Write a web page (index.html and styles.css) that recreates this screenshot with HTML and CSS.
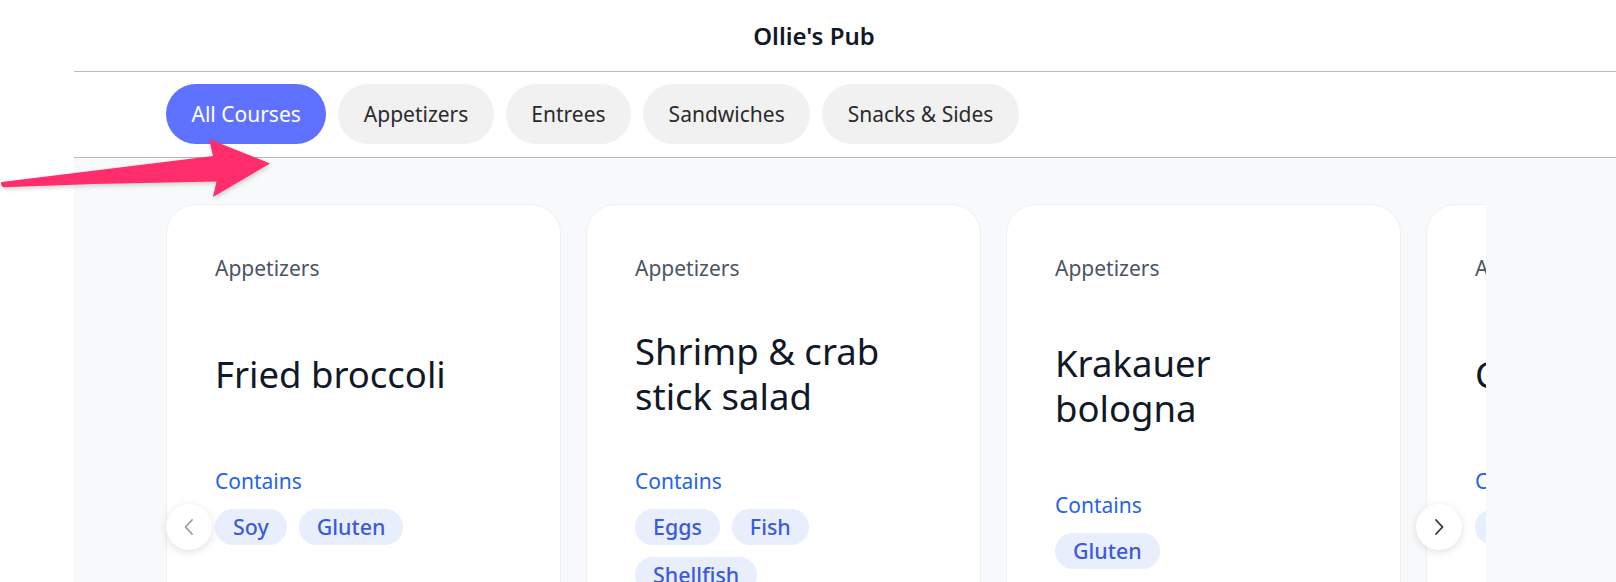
FILE: index.html
```html
<!DOCTYPE html>
<html lang="en">
<head>
<meta charset="utf-8">
<title>Ollie's Pub</title>
<link rel="stylesheet" href="styles.css">
</head>
<body>
<div class="page">
  <header class="topbar">
    <h1 class="venue">Ollie's Pub</h1>
  </header>
  <div class="layout">
    <div class="gutter"></div>
    <main class="main">
      <nav class="course-tabs">
        <button class="tab tab-active">All Courses</button>
        <button class="tab">Appetizers</button>
        <button class="tab">Entrees</button>
        <button class="tab">Sandwiches</button>
        <button class="tab">Snacks &amp; Sides</button>
      </nav>
      <section class="menu">
        <div class="carousel">
          <div class="track">
            <article class="card">
              <div class="card-course">Appetizers</div>
              <div class="card-title-wrap"><h2 class="card-title">Fried broccoli</h2></div>
              <div class="allergens">
                <div class="allergens-label">Contains</div>
                <ul class="chips">
                  <li class="chip">Soy</li>
                  <li class="chip">Gluten</li>
                </ul>
              </div>
              <p class="card-desc lines-7">Crispy battered broccoli florets fried golden and served hot with a side of house-made garlic aioli and a wedge of lemon for squeezing. A pub favourite for sharing at the table with friends before the main course arrives from the kitchen.</p>
              <div class="card-price">$8.50</div>
            </article>
            <article class="card">
              <div class="card-course">Appetizers</div>
              <div class="card-title-wrap"><h2 class="card-title">Shrimp &amp; crab stick salad</h2></div>
              <div class="allergens">
                <div class="allergens-label">Contains</div>
                <ul class="chips">
                  <li class="chip">Eggs</li>
                  <li class="chip">Fish</li>
                  <li class="chip">Shellfish</li>
                </ul>
              </div>
              <p class="card-desc lines-5">Chilled shrimp and crab sticks tossed with crisp lettuce, cucumber, sweet corn and a light creamy dressing, finished with fresh dill and cracked black pepper. Served cold with toasted bread on the side.</p>
              <div class="card-price">$11.00</div>
            </article>
            <article class="card">
              <div class="card-course">Appetizers</div>
              <div class="card-title-wrap"><h2 class="card-title">Krakauer bologna</h2></div>
              <div class="allergens">
                <div class="allergens-label">Contains</div>
                <ul class="chips">
                  <li class="chip">Gluten</li>
                </ul>
              </div>
              <p class="card-desc lines-6">Thinly sliced smoked Krakauer sausage served on a wooden board with pickles, spicy mustard, pickled onions and fresh rye bread. A hearty classic from the old country, great with a cold lager or a dark stout.</p>
              <div class="card-price">$9.75</div>
            </article>
            <article class="card">
              <div class="card-course">Appetizers</div>
              <div class="card-title-wrap"><h2 class="card-title">Cheese curds</h2></div>
              <div class="allergens">
                <div class="allergens-label">Contains</div>
                <ul class="chips">
                  <li class="chip">Milk</li>
                  <li class="chip">Gluten</li>
                </ul>
              </div>
              <p class="card-desc lines-7">Fresh white cheddar curds dipped in a light beer batter and fried until golden and squeaky, served with a tangy ranch dipping sauce and a sprinkle of chopped chives. Perfect for sharing with the whole table on game night.</p>
              <div class="card-price">$7.25</div>
            </article>
          </div>
          <button class="nav-btn nav-prev" aria-label="Previous">
            <svg width="14" height="18" viewBox="0 0 14 18"><path d="M10 2 L3.5 9 L10 16" fill="none" stroke="#9a9a9a" stroke-width="1.8" stroke-linecap="round" stroke-linejoin="round"/></svg>
          </button>
          <button class="nav-btn nav-next" aria-label="Next">
            <svg width="14" height="18" viewBox="0 0 14 18"><path d="M4 2 L10.5 9 L4 16" fill="none" stroke="#333333" stroke-width="1.8" stroke-linecap="round" stroke-linejoin="round"/></svg>
          </button>
        </div>
      </section>
    </main>
  </div>
  <svg class="annotation-arrow" width="280" height="80" viewBox="0 0 280 80" aria-hidden="true">
    <path d="M1.5 52 L213 26 L209 9 L270 33.5 L213 67 L216.5 51.5 Q110 53 3 57.2 Q0 54.6 1.5 52 Z" fill="#ff2d6b"/>
  </svg>
</div>
</body>
</html>
```

FILE: styles.css
```css
* {
  box-sizing: border-box;
}

html, body {
  margin: 0;
  padding: 0;
  background: #ffffff;
}

body {
  font-family: "Noto Sans", "Open Sans", sans-serif;
  color: #111827;
}

.page {
  position: relative;
  width: 100%;
  height: 100vh;
  overflow: hidden;
  display: flex;
  flex-direction: column;
}

.topbar {
  height: 71px;
  display: flex;
  align-items: center;
  justify-content: center;
  padding-left: 12px;
  flex: none;
}

.venue {
  margin: 0;
  font-size: 24px;
  line-height: 32px;
  font-weight: 600;
  color: #111827;
}

.layout {
  flex: 1;
  display: flex;
  min-height: 0;
}

.gutter {
  width: 74px;
  flex: none;
  background: #ffffff;
}

.main {
  flex: 1;
  display: flex;
  flex-direction: column;
  border-top: 1px solid #b9b9b9;
  min-width: 0;
}

.course-tabs {
  display: flex;
  gap: 12px;
  padding: 12px 0 13px 92px;
  border-bottom: 1px solid #b9b9b9;
  background: #ffffff;
}

.tab {
  height: 60px;
  padding: 0 25.5px;
  border: none;
  border-radius: 30px;
  background: #f1f1f1;
  color: #2b2b2b;
  font-family: "Noto Sans", sans-serif;
  font-size: 21px;
  line-height: 60px;
  cursor: pointer;
}

.tab-active {
  background: #5f72ff;
  color: #ffffff;
}

.menu {
  flex: 1;
  background: #f8f9fb;
  padding: 46px 0 0 92px;
}

.carousel {
  position: relative;
  width: 1320px;
}

.track {
  display: flex;
  gap: 25px;
  height: 646px;
  overflow: hidden;
}

.card {
  flex: none;
  width: 395px;
  display: flex;
  flex-direction: column;
  padding: 49px 48px 48px;
  background: #ffffff;
  border: 1px solid #eef0f4;
  border-radius: 30px;
}

.card-course {
  font-size: 21px;
  line-height: 28px;
  color: #4b5563;
}

.card-title-wrap {
  flex: 1;
  display: flex;
  align-items: center;
}

.card-title {
  margin: 0;
  font-size: 36.5px;
  line-height: 45px;
  font-weight: 400;
  color: #111827;
}

.allergens-label {
  font-size: 21px;
  line-height: 28px;
  color: #2563eb;
}

.chips {
  list-style: none;
  margin: 14px 0 0;
  padding: 0;
  display: flex;
  flex-wrap: wrap;
  gap: 12px;
}

.chip {
  height: 36px;
  line-height: 36px;
  padding: 0 18px;
  border-radius: 18px;
  background: #e9eefc;
  color: #3b5bdb;
  font-size: 21.4px;
  font-weight: 500;
}

.card-desc {
  margin: 36px 0 0;
  font-size: 18px;
  line-height: 24px;
  color: #4b5563;
  display: -webkit-box;
  -webkit-box-orient: vertical;
  overflow: hidden;
}

.lines-5 { -webkit-line-clamp: 5; height: 120px; }
.lines-6 { -webkit-line-clamp: 6; height: 144px; }
.lines-7 { -webkit-line-clamp: 7; height: 168px; }

.card-price {
  margin-top: 24px;
  font-size: 22px;
  line-height: 28.5px;
  font-weight: 600;
  color: #111827;
}

.nav-btn {
  position: absolute;
  top: 50%;
  margin-top: -23px;
  width: 46px;
  height: 46px;
  padding: 0;
  border: none;
  border-radius: 50%;
  background: #ffffff;
  box-shadow: 0 2px 8px rgba(0, 0, 0, 0.12);
  display: flex;
  align-items: center;
  justify-content: center;
  cursor: pointer;
}

.nav-prev {
  left: 0;
}

.nav-next {
  right: 24px;
}

.annotation-arrow {
  position: absolute;
  left: 0;
  top: 130px;
  pointer-events: none;
  filter: drop-shadow(1px 2px 2px rgba(0, 0, 0, 0.18));
}
```
